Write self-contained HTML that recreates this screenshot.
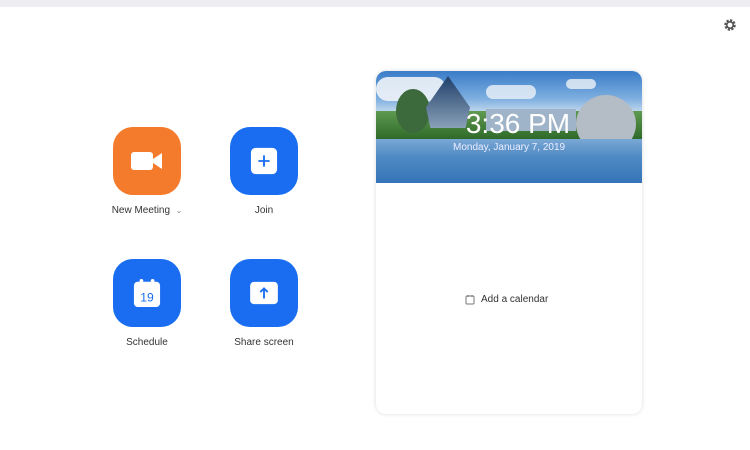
<!DOCTYPE html>
<html><head><meta charset="utf-8"><style>
*{margin:0;padding:0;box-sizing:border-box}
body{width:750px;height:450px;background:#fff;font-family:"Liberation Sans",sans-serif;position:relative;overflow:hidden}
.top{position:absolute;left:0;top:0;width:750px;height:7px;background:#eeeef2}
.btn{position:absolute;width:68px;height:68px;border-radius:20px;background:#1a6df0;display:flex;align-items:center;justify-content:center}
.lbl{position:absolute;font-size:10px;color:#333;text-align:center;width:120px}
.card{position:absolute;left:376px;top:71px;width:266px;height:343px;border-radius:10px;background:#fff;box-shadow:0 0 4px rgba(0,0,0,.15);overflow:hidden}
.img{position:absolute;left:0;top:0;width:266px;height:112px;background:linear-gradient(#3a7cc8 0%,#7fb0e0 25%,#c8dcee 38%,#d8e4ee 42%)}
</style></head><body>
<div class="top"></div>
<svg style="position:absolute;left:723px;top:18px" width="14" height="14" viewBox="0 0 14 14"><circle cx="7" cy="7" r="4.5" fill="none" stroke="#555" stroke-width="2.5" stroke-dasharray="2.2 1.3"/><circle cx="7" cy="7" r="3.2" fill="none" stroke="#555" stroke-width="1.6"/></svg>

<div class="btn" style="left:113px;top:127px;background:#f47a2c">
<svg width="36" height="22" viewBox="0 0 36 22"><rect x="2" y="2" width="22" height="18" rx="3" fill="#fff"/><path d="M24 9 L33 3 V19 L24 13Z" fill="#fff"/></svg></div>
<div class="lbl" style="left:87px;top:205px">New Meeting &nbsp;<span style="color:#888;font-size:8px">⌄</span></div>

<div class="btn" style="left:230px;top:127px">
<svg width="28" height="28" viewBox="0 0 30 30"><rect x="1" y="1" width="28" height="28" rx="5" fill="#fff"/><path d="M15 9V21M9 15H21" stroke="#1a6df0" stroke-width="2"/></svg></div>
<div class="lbl" style="left:204px;top:205px">Join</div>

<div class="btn" style="left:113px;top:259px">
<svg width="28" height="30" viewBox="0 0 30 32"><rect x="1" y="4" width="28" height="27" rx="4" fill="#fff"/><circle cx="9" cy="3" r="2" fill="#fff"/><circle cx="21" cy="3" r="2" fill="#fff"/><text x="15" y="25" font-size="13" font-family="Liberation Sans" fill="#1a6df0" text-anchor="middle">19</text></svg></div>
<div class="lbl" style="left:87px;top:337px">Schedule</div>

<div class="btn" style="left:230px;top:259px">
<svg width="30" height="24" viewBox="0 0 32 26"><rect x="1" y="1" width="30" height="24" rx="4" fill="#fff"/><path d="M16 19V8M12 12L16 8L20 12" stroke="#1a6df0" stroke-width="2" fill="none"/></svg></div>
<div class="lbl" style="left:204px;top:337px">Share screen</div>

<div class="card">
<div class="img">
<div style="position:absolute;left:0px;top:6px;width:70px;height:24px;background:#eef3f8;border-radius:12px;opacity:.9"></div>
<div style="position:absolute;left:110px;top:14px;width:50px;height:14px;background:#eef3f8;border-radius:8px;opacity:.8"></div>
<div style="position:absolute;left:190px;top:8px;width:30px;height:10px;background:#eef3f8;border-radius:8px;opacity:.8"></div>
<div style="position:absolute;left:0;top:40px;width:266px;height:28px;background:linear-gradient(#5f9a50,#2f6a2a)"></div>
<div style="position:absolute;left:20px;top:18px;width:34px;height:44px;background:#3c6a3c;border-radius:50%"></div>
<div style="position:absolute;left:50px;top:5px;width:44px;height:52px;background:linear-gradient(#1f3f6a,#8aa0b8);clip-path:polygon(50% 0,100% 60%,90% 100%,10% 100%,0 60%)"></div>
<div style="position:absolute;left:110px;top:38px;width:90px;height:22px;background:#9fb4c8"></div>
<div style="position:absolute;left:200px;top:24px;width:60px;height:58px;background:#b4bcc6;border-radius:50%"></div>
<div style="position:absolute;left:0;top:68px;width:266px;height:44px;background:linear-gradient(#7aa8d4,#4f8ac4 40%,#3574b8)"></div>
<div style="position:absolute;left:0;top:37px;width:266px;text-align:center;color:#fff;font-size:28px;padding-left:18px">3:36 PM</div>
<div style="position:absolute;left:77px;top:71px;color:#eef;font-size:10px">Monday, January 7, 2019</div>
</div>
<div style="position:absolute;left:89px;top:223px;font-size:10px;color:#333;display:flex;align-items:center;gap:6px">
<svg width="10" height="11" viewBox="0 0 10 11"><rect x="1" y="2" width="8" height="8" rx="1" fill="none" stroke="#777"/><path d="M3 1V3M7 1V3" stroke="#777"/></svg>Add a calendar</div>
</div>
</body></html>
